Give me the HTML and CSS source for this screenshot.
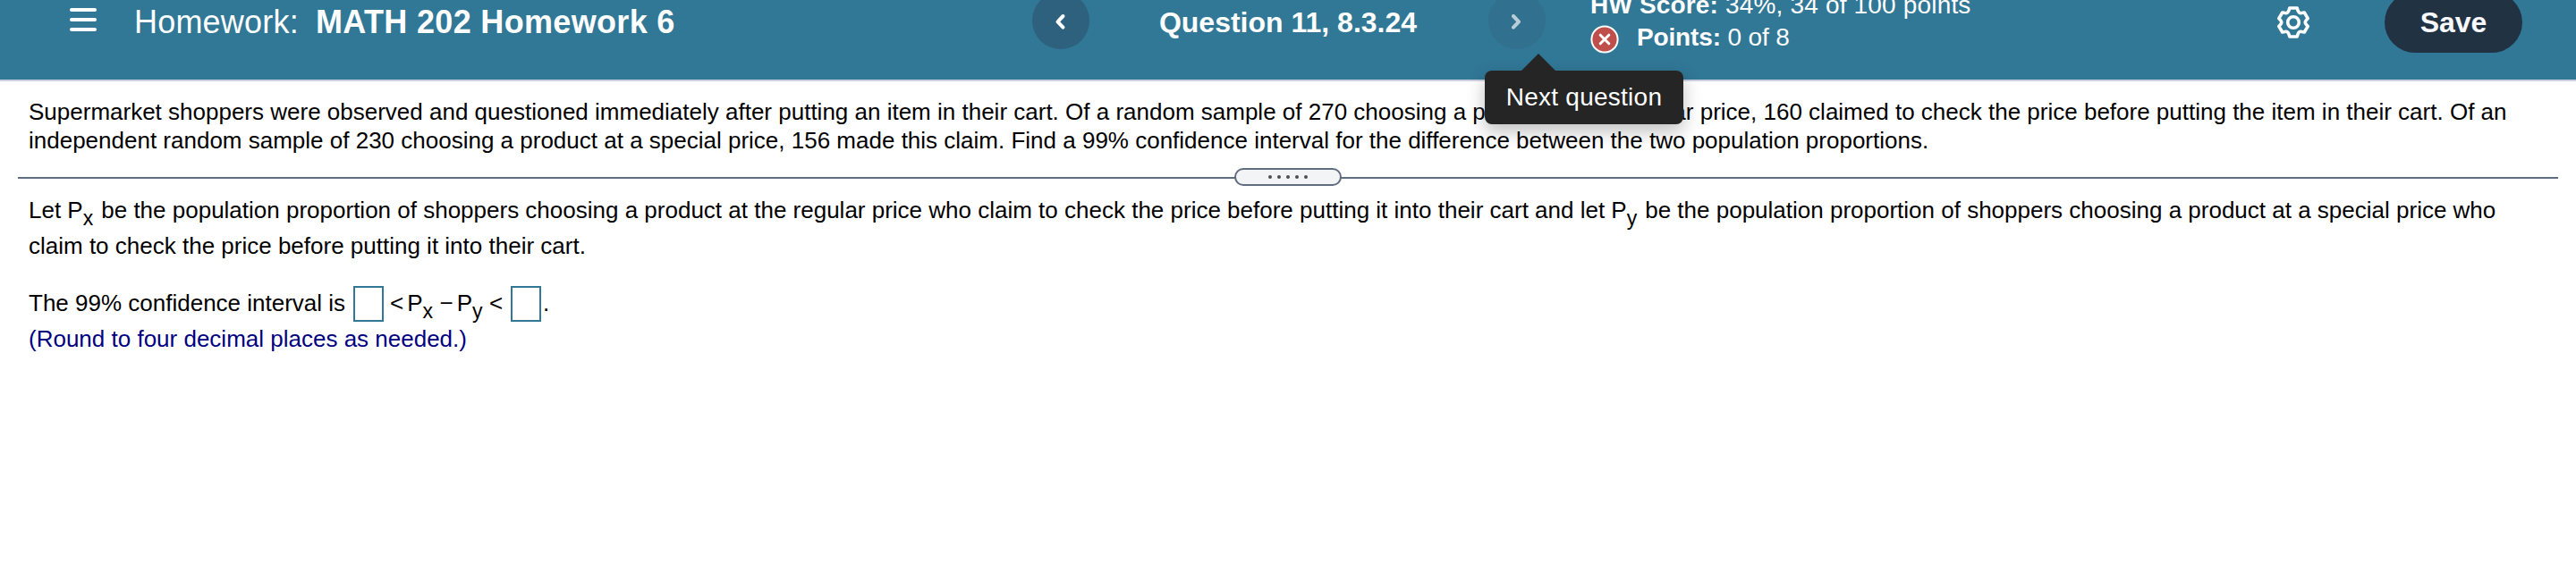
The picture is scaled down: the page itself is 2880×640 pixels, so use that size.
FILE: index.html
```html
<!DOCTYPE html>
<html lang="en">
<head>
<meta charset="utf-8">
<title>MATH 202 Homework 6</title>
<link rel="stylesheet" href="styles.css">
</head>
<body>
<header class="bar">
  <button class="menu" aria-label="Menu"><span></span><span></span><span></span></button>
  <div class="title"><span class="title-label">Homework:</span><b class="title-name">MATH 202 Homework 6</b></div>
  <nav class="nav">
    <button class="round" aria-label="Previous question"><svg width="64" height="64" viewBox="0 0 64 64"><path d="M34.5 27 L28.5 33.3 L34.5 39.6"/></svg></button>
    <b class="question">Question 11, 8.3.24</b>
    <button class="round round-dim" aria-label="Next question"><svg width="64" height="64" viewBox="0 0 64 64"><path d="M28 27 L34 33.3 L28 39.6"/></svg></button>
    <div class="tooltip">Next question</div>
  </nav>
  <div class="score">
    <div class="score-row total"><b>HW Score:</b> 34%, 34 of 100 points</div>
    <div class="score-row points"><svg class="wrong" width="32" height="32" viewBox="0 0 32 32"><circle cx="16" cy="16" r="14.6"/><path d="M11.2 11.2 L20.8 20.8 M20.8 11.2 L11.2 20.8"/></svg><span class="points-text"><b>Points:</b> 0 of 8</span></div>
  </div>
  <svg class="gear" width="36" height="36" viewBox="0 0 36 36"><path d="M13.8 2 H22.2 L23.2 5.2 Q24.4 8.2 27.4 7.6 L30.3 7 L34.2 13.6 L32.2 15.8 Q30.4 18 32.2 20.2 L34.2 22.4 L30.3 29 L27.4 28.4 Q24.4 27.8 23.2 30.8 L22.2 34 H13.8 L12.8 30.8 Q11.6 27.8 8.6 28.4 L5.7 29 L1.8 22.4 L3.8 20.2 Q5.6 18 3.8 15.8 L1.8 13.6 L5.7 7 L8.6 7.6 Q11.6 8.2 12.8 5.2 Z"/><circle cx="18" cy="18" r="6.3"/></svg>
  <button class="save">Save</button>
</header>
<main>
  <section class="problem">
    <p><span class="l1">Supermarket shoppers were observed and questioned immediately after putting an item in their cart. Of a random sample of 270 choosing a product at the regular price, 160 claimed to check the price before putting the item in their cart. Of an</span><br><span class="l2">independent random sample of 230 choosing a product at a special price, 156 made this claim. Find a 99% confidence interval for the difference between the two population proportions.</span></p>
  </section>
  <div class="divider"><div class="handle"><i></i><i></i><i></i><i></i><i></i></div></div>
  <section class="work">
    <p><span class="l3">Let P<sub>x</sub> be the population proportion of shoppers choosing a product at the regular price who claim to check the price before putting it into their cart and let P<sub>y</sub> be the population proportion of shoppers choosing a product at a special price who</span><br><span class="l4">claim to check the price before putting it into their cart.</span></p>
    <div class="answer"><span class="l5">The 99% confidence interval is</span><span class="box"></span><span class="expr"><span>&lt;</span><span class="term">P<sub>x</sub></span><span>−</span><span class="term">P<sub>y</sub></span><span>&lt;</span></span><span class="box"></span><span class="dot">.</span></div>
    <p class="hint">(Round to four decimal places as needed.)</p>
  </section>
</main>
</body>
</html>
```
FILE: styles.css
```css
* { box-sizing: border-box; }
body { margin: 0; height: 640px; overflow: hidden; background: #fff; color: #000; font-family: "Liberation Sans", Arial, sans-serif; font-size: 26px; }
p { margin: 0; white-space: nowrap; }
button { border: 0; padding: 0; font-family: inherit; }
.bar { height: 91px; background: #317796; border-bottom: 2px solid #cbcfdf; color: #fff; display: flex; align-items: flex-start; padding-left: 78px; }
.menu { width: 30px; margin-top: 9px; background: none; display: flex; flex-direction: column; gap: 7px; }
.menu span { height: 4px; border-radius: 2px; background: #fff; }
.title { width: 601px; margin-left: 42px; margin-top: 5px; line-height: 40px; font-size: 36px; white-space: nowrap; display: flex; }
.title-label { flex: none; width: 203px; letter-spacing: .2px; }
.title-name { flex: none; letter-spacing: .33px; }
.nav { position: relative; width: 574px; margin-left: 403px; margin-top: -9px; display: flex; align-items: flex-start; justify-content: space-between; }
.round { width: 64px; height: 64px; border-radius: 50%; background: #2e617d; }
.round svg { display: block; fill: none; stroke: #fff; stroke-width: 4; stroke-linecap: round; stroke-linejoin: round; }
.round-dim { background: #327090; }
.round-dim svg { opacity: .65; }
.question { font-size: 32px; line-height: 36px; margin-top: 16px; margin-right: 2px; white-space: nowrap; }
.tooltip { position: absolute; z-index: 2; left: 506px; top: 88px; width: 222px; height: 60px; border-radius: 8px; background: #252525; font-size: 28px; line-height: 60px; text-align: center; letter-spacing: .25px; box-shadow: 0 8px 20px rgba(0,0,0,.25); white-space: nowrap; }
.tooltip::before { content: ""; position: absolute; left: 40px; top: -19px; border: 20px solid transparent; border-top: 0; border-bottom: 20px solid #252525; }
.score { width: 500px; margin-left: 50px; margin-top: -12px; font-size: 28px; white-space: nowrap; }
.score-row { height: 36px; line-height: 36px; }
.total { letter-spacing: .17px; }
.points { display: flex; align-items: center; gap: 20px; }
.points-text { letter-spacing: -.15px; }
.wrong { fill: #bf4f4b; stroke: #fff; stroke-width: 2; margin-top: 4px; }
.wrong path { stroke-width: 3; stroke-linecap: round; }
.gear { margin-left: 268px; margin-top: 7px; fill: none; stroke: #fff; stroke-width: 3.6; stroke-linejoin: round; }
.save { width: 154px; height: 68px; margin-left: 84px; margin-top: -9px; border-radius: 34px; background: #213243; color: #f8f8ff; font-size: 32px; font-weight: bold; }
.problem { height: 97px; padding: 18px 0 0 32px; line-height: 32px; }
.divider { height: 20px; margin: 0 20px; display: flex; justify-content: center; background: linear-gradient(#606d7e, #606d7e) 0 10px / 100% 2px no-repeat; }
.handle { width: 120px; height: 20px; border: 2px solid #606d7e; border-radius: 10px; background: #f2f4f6; display: flex; justify-content: center; align-items: center; gap: 6px; }
.handle i { width: 4px; height: 4px; border-radius: 50%; background: #4d4d4d; }
.work { padding: 7px 0 0 32px; line-height: 40px; }
sub { font-size: 23px; line-height: 0; vertical-align: -8px; }
.l3 sub { margin-right: 1.8px; }
.answer { height: 40px; margin-top: 25px; display: flex; white-space: nowrap; }
.l5 { width: 363px; line-height: 39px; }
.box { width: 34px; height: 40px; border: 2px solid #317796; }
.expr { width: 142px; padding-left: 7px; line-height: 39px; display: flex; }
.term { margin: 0 7.5px 0 4px; }
.dot { padding-left: 2px; line-height: 39px; }
.hint { color: #00007f; margin-top: -1px; }
```
